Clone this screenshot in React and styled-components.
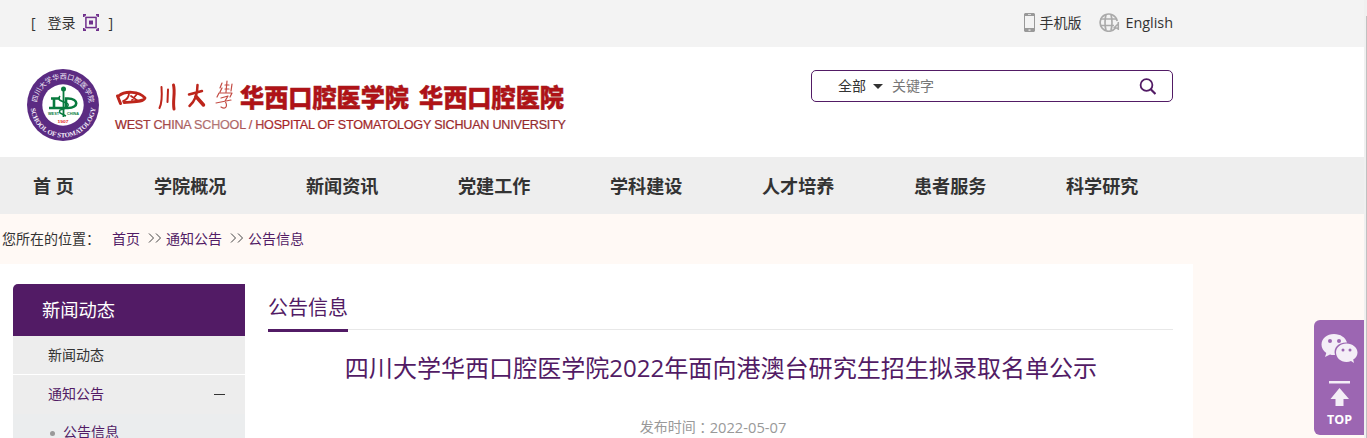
import React from 'react'
import styled, { createGlobalStyle } from 'styled-components'

const GlobalStyle = createGlobalStyle`
    *{
        box-sizing:border-box;
    }
    body{
        margin:0;
        background-color:#fff9f5;
        color:#333;
        font-family:"Open Sans","Noto Sans CJK SC",sans-serif;
        font-size:14px;
    }
    a{
        color:inherit;
        text-decoration:none;
    }
`
const Page = styled.div`
    height:438px;
    display:flex;
    overflow:hidden;
`
const Main = styled.div`
    flex:1;
    min-width:0;
`
const ScrollEdge = styled.div`
    width:3px;
    padding-top:16px;
    display:flex;
    justify-content:flex-end;
    background-color:#f0f0f0;
`
const ScrollThumb = styled.div`
    width:1px;
    background-color:#c1c1c1;
`
const TopBar = styled.div`
    height:47px;
    background-color:#f3f3f3;
`
const Wrap = styled.div`
    width:1193px;
    height:100%;
    padding:0 20px 0 ${props => props.$left || 0}px;
    display:flex;
    align-items:center;
    justify-content:space-between;
`
const Login = styled.div`
    display:flex;
    align-items:center;
    line-height:20px;
    padding-bottom:2px;
    svg{
        margin:0 10px 0 7px;
    }
`
const LoginText = styled.span`
    margin-left:12px;
`
const TopLinks = styled.div`
    display:flex;
    align-items:center;
    padding-bottom:2px;
`
const TopLink = styled.a`
    display:flex;
    align-items:center;
    gap:${props => props.$gap}px;
    margin-left:18px;
    line-height:20px;
`
const English = styled.span`
    font-size:14.4px;
`
const Header = styled.div`
    height:110px;
    background-color:white;
`
const Logo = styled.svg`
    display:block;
`
const Search = styled.div`
    width:362px;
    height:32px;
    margin-bottom:32px;
    padding:0 16px 0 26px;
    border:1px solid #521b65;
    border-radius:5px;
    display:flex;
    align-items:center;
    line-height:20px;
`
const Caret = styled.span`
    margin:1px 9px 0 7px;
    border:5px solid transparent;
    border-top-color:#333;
    border-bottom:0;
`
const Keyword = styled.span`
    flex:1;
    color:#777;
`
const Nav = styled.div`
    height:57px;
    padding:0 0 1px 33px;
    display:flex;
    align-items:center;
    background-color:#eee;
`
const NavItem = styled.a`
    width:${props => props.$width || 152}px;
    font-size:18.1px;
    font-weight:700;
    white-space:pre;
`
const Crumbs = styled.div`
    height:50px;
    padding:0 0 2px 2px;
    display:flex;
    align-items:center;
    white-space:pre;
    a{
        color:#521b65;
    }
    svg{
        margin:0 4px 0 8px;
    }
`
const CrumbLabel = styled.span`
    width:110px;
`
const Content = styled.div`
    width:1193px;
    height:174px;
    padding:20px 20px 0 13px;
    display:flex;
    gap:23px;
    background-color:white;
    overflow:hidden;
`
const Sidebar = styled.div`
    width:232px;
`
const SideTitle = styled.div`
    height:52px;
    padding-left:29px;
    line-height:52px;
    font-size:18.3px;
    color:white;
    background-color:#521b65;
    border-top-left-radius:5px;
`
const SideItem = styled.div`
    height:39px;
    padding:0 20px 2px 35px;
    display:flex;
    align-items:center;
    justify-content:space-between;
    background-color:#ededed;
    border-bottom:1px solid ${props => props.$active ? '#ededed' : 'white'};
    color:${props => props.$active ? '#521b65' : '#333'};
`
const Minus = styled.span`
    width:11px;
    height:1px;
    margin-top:2px;
    background-color:#333;
`
const SubItem = styled.div`
    height:38px;
    padding:0 0 4px 37px;
    display:flex;
    align-items:center;
    gap:8px;
    color:#521b65;
    background-color:#ebedee;
    &::before{
        content:'';
        width:5px;
        height:5px;
        margin-top:4px;
        border-radius:50%;
        background-color:#999;
    }
`
const Article = styled.div`
    flex:1;
    display:flex;
    flex-direction:column;
    align-items:center;
`
const SectionHead = styled.div`
    width:100%;
    height:46px;
    border-bottom:1px solid #e8e8e8;
`
const SectionTitle = styled.div`
    width:80px;
    height:48px;
    line-height:47px;
    font-size:20px;
    color:#521b65;
    border-bottom:3px solid #521b65;
`
const Title = styled.h1`
    margin:17px 0 0 1px;
    font-size:24.05px;
    font-weight:400;
    line-height:42px;
    color:#521b65;
    white-space:nowrap;
`
const Time = styled.div`
    margin:28px 15px 0 0;
    display:flex;
    line-height:20px;
    color:#999;
`
const Colon = styled.span`
    font-family:"Noto Sans CJK TC",sans-serif;
`
const DateText = styled.span`
    font-size:14.7px;
`
const SideTools = styled.div`
    position:fixed;
    right:3px;
    top:320px;
    width:50px;
    height:115px;
    padding:13px 0 0 1px;
    display:flex;
    flex-direction:column;
    align-items:center;
    color:white;
    background-color:#9c66b2;
    border-radius:6px 0 0 6px;
    font-size:12.5px;
    font-weight:700;
    line-height:17px;
    svg{
        display:block;
    }
`
const ArrowIcon = styled.svg`
    margin:17px 0 5px;
`

const navItems = ['学院概况', '新闻资讯', '党建工作', '学科建设', '人才培养', '患者服务', '科学研究']

const ScanIcon = () => (
  <svg width="16" height="17" viewBox="0 0 16 17" fill="none" stroke="#6f2f8c">
    <path d="M.8 3V.8H3M13 .8H15.200V3M15.200 14V16.200H13M3 16.200H.8V14" strokeWidth="1.700"/>
    <rect x="2.900" y="3.400" width="10.200" height="10.200" strokeWidth="1.500"/>
    <rect x="6" y="6.500" width="4" height="4" fill="#6f2f8c" stroke="none"/>
  </svg>
)

const PhoneIcon = () => (
  <svg width="11" height="19" viewBox="0 0 11 19">
    <path fill="#999" fillRule="evenodd" d="M1 0H10L11 1V18L10 19H1L0 18V1ZM1 3V15H10V3ZM4.500 16.500V17.800H6.500V16.500ZM4 1V1.700H7V1Z"/>
  </svg>
)

const GlobeIcon = () => (
  <svg width="21" height="19" viewBox="0 0 21 19" fill="none" stroke="#aaa" strokeWidth="1.700">
    <path d="M16.500 15A8.600 8.600 0 1 1 18.200 8"/>
    <path d="M7 1.500Q5 9.500 7 17.500M12 1.500Q14 9.500 12 17.500M1.500 6H17.500M1.500 12.500H15"/>
    <path d="M19.300 9V17M19 11L15.500 14.500L19 15.500" strokeWidth="1.500"/>
  </svg>
)

const Arrows = () => (
  <svg width="14" height="10" viewBox="0 0 14 10" fill="none" stroke="#444">
    <path d="M1 .5L5.500 5L1 9.500M8 .5L12.500 5L8 9.500"/>
  </svg>
)

const SchoolLogo = () => (
  <Logo width="550" height="90" viewBox="22 57 550 90">
    <defs>
      <path id="ringTop" d="M37.080 107A26 26 0 1 1 88.920 107"/>
      <path id="ringBottom" d="M30.500 105A32.500 32.500 0 0 0 95.500 105"/>
      <linearGradient id="red" x1="0" x2="1">
        <stop offset="0" stopColor="#982021"/>
        <stop offset=".23" stopColor="#b27878"/>
        <stop offset=".36" stopColor="#a52224"/>
        <stop offset="1" stopColor="#912b2d"/>
      </linearGradient>
    </defs>
    <circle cx="63" cy="105" r="36" fill="#5b2b82"/>
    <circle cx="63" cy="105" r="20.700" fill="white"/>
    <g fill="#f4eef9">
      <text fontSize="7" fontFamily="Noto Sans CJK SC, sans-serif"><textPath href="#ringTop" startOffset="4.500">四川大学华西口腔医学院</textPath></text>
      <text fontSize="6.800" fontWeight="700" fontFamily="Liberation Serif, serif"><textPath href="#ringBottom" startOffset="3.500">SCHOOL OF STOMATOLOGY</textPath></text>
    </g>
    <g fill="none" stroke="#087a3e" strokeWidth="2.600">
      <path d="M51 98.500H60M54 98V108M49 108H68C79 108 79 98.500 68 98.500H66V108"/>
      <path d="M63.500 89V117" strokeWidth="1.800"/>
      <path d="M60 96C54 103 73 101 67 107C63 111 58 108 60 113L66 116" strokeWidth="1.500"/>
    </g>
    <circle cx="63.500" cy="89" r="2.500" fill="#087a3e"/>
    <g fontFamily="Liberation Sans, sans-serif" fontWeight="700">
      <text x="48" y="115" fontSize="4.200" textLength="11" lengthAdjust="spacingAndGlyphs" fill="#087a3e">WEST</text>
      <text x="67" y="115" fontSize="4.200" textLength="12" lengthAdjust="spacingAndGlyphs" fill="#087a3e">CHINA</text>
      <text x="57.500" y="123.300" fontSize="4" textLength="11" lengthAdjust="spacingAndGlyphs" fill="#d22">1907</text>
    </g>
    <g fill="none" stroke="#bd251b" strokeLinecap="round" strokeLinejoin="round">
      <path d="M117.500 96L120.500 103.500" strokeWidth="3"/>
      <path d="M118.500 96C125 90.500 139 91 145 98C143 102 136 101.500 124 102.500" strokeWidth="2.800"/>
      <path d="M129 93C129 98 126 100 123 101M131 96L138 101M137 94L132 100" strokeWidth="1.800"/>
      <path d="M161.500 87C162 94 162 103 159.500 108M168 89.500L167.500 102" strokeWidth="2"/>
      <path d="M173.500 85C175.500 93 172.500 100 174 109" strokeWidth="3"/>
      <path d="M189 94.500L202 91M197.500 85C197.500 96 194 102 189.500 106" strokeWidth="2.500"/>
      <path d="M196 96.500L203.500 105" strokeWidth="3.500"/>
      <path d="M222 83L220 88M222 88L220 92M227 81L226 92M225 85H229M225 89H229M232 84L231 91M217 97L219 93L232 93L230 97M221 98L228 96L225 101C228 106 226 110 221 107M216 103L231 100" strokeWidth="1.200" stroke="#c34b43"/>
    </g>
    <g fill="#b01217" stroke="#a31f20" strokeWidth=".5" fontFamily="Noto Sans CJK SC, sans-serif" fontWeight="900" fontSize="25.500">
      <text x="240" y="107.300" textLength="169" lengthAdjust="spacingAndGlyphs">华西口腔医学院</text>
      <text x="419" y="107.300" textLength="145" lengthAdjust="spacingAndGlyphs">华西口腔医院</text>
    </g>
    <text x="115" y="128.500" fill="url(#red)" stroke="url(#red)" strokeWidth=".2" textLength="451" fontFamily="Liberation Sans, sans-serif" fontSize="12.600">WEST CHINA SCHOOL / HOSPITAL OF STOMATOLOGY SICHUAN UNIVERSITY</text>
  </Logo>
)

const App = () => {
  return (
    <Page>
      <GlobalStyle/>
      <Main>
        <TopBar>
          <Wrap $left={31}>
            <Login>[<LoginText>登录</LoginText><ScanIcon/>]</Login>
            <TopLinks>
              <TopLink $gap={4}><PhoneIcon/>手机版</TopLink>
              <TopLink $gap={5}><GlobeIcon/><English>English</English></TopLink>
            </TopLinks>
          </Wrap>
        </TopBar>
        <Header>
          <Wrap $left={22}>
            <SchoolLogo/>
            <Search>
              全部<Caret/>
              <Keyword>关键字</Keyword>
              <svg width="17" height="17" viewBox="0 0 17 17" fill="none" stroke="#521b65" strokeWidth="1.800">
                <circle cx="7.500" cy="7" r="5.900"/>
                <path d="M11.500 11L16.500 16" strokeWidth="2.200"/>
              </svg>
            </Search>
          </Wrap>
        </Header>
        <Nav>
          <NavItem $width={121}>首 页</NavItem>
          {navItems.map(item => <NavItem key={item}>{item}</NavItem>)}
        </Nav>
        <Crumbs>
          <CrumbLabel>您所在的位置：</CrumbLabel>
          <a>首页</a><Arrows/><a>通知公告</a><Arrows/><a>公告信息</a>
        </Crumbs>
        <Content>
          <Sidebar>
            <SideTitle>新闻动态</SideTitle>
            <SideItem>新闻动态</SideItem>
            <SideItem $active>通知公告<Minus/></SideItem>
            <SubItem>公告信息</SubItem>
          </Sidebar>
          <Article>
            <SectionHead>
              <SectionTitle>公告信息</SectionTitle>
            </SectionHead>
            <Title>四川大学华西口腔医学院2022年面向港澳台研究生招生拟录取名单公示</Title>
            <Time>发布时间<Colon>：</Colon><DateText>2022-05-07</DateText></Time>
          </Article>
        </Content>
      </Main>
      <ScrollEdge>
        <ScrollThumb/>
      </ScrollEdge>
      <SideTools>
        <svg width="37" height="31" viewBox="0 0 37 31">
          <path fill="#f4eef7" d="M13 1C6 1 .5 5.500 .5 11.500C.5 15 2.300 18 5.300 20L4 24L9 21.500Q11 22.200 14 22C12 14 18 9 26 9.500C24.500 4.500 19.500 1 13 1Z"/>
          <path fill="#f4eef7" d="M25.500 10.500C19.500 10.500 15 14.500 15 19.500S19.500 29 25.500 29Q28 29 30 28L33 30L32.200 26.500C35 25 36.500 22.300 36.500 19.500C36.500 14.500 31.500 10.500 25.500 10.500Z"/>
          <g fill="#9c66b2">
            <circle cx="9" cy="8" r="2"/><circle cx="18" cy="8" r="2"/>
            <circle cx="22" cy="17" r="1.500"/><circle cx="29" cy="17" r="1.500"/>
          </g>
        </svg>
        <ArrowIcon width="21" height="25" viewBox="0 0 21 25" fill="#f4eef7">
          <path d="M0 0H21V2.500H0ZM10.500 7L20 18H14.500V25H6.500V18H1.500Z"/>
        </ArrowIcon>
        TOP
      </SideTools>
    </Page>
  )
}

export default App
